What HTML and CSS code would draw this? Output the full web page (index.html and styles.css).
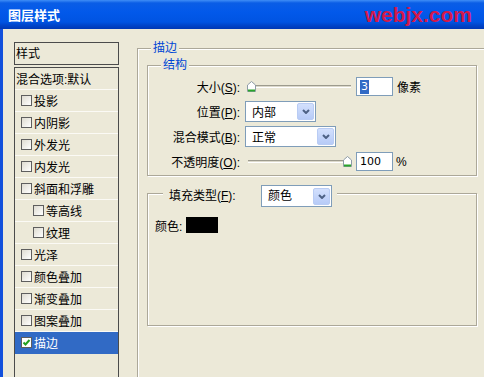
FILE: index.html
```html
<!DOCTYPE html>
<html>
    <head>
        <meta charset="utf-8">
        <title>图层样式</title>
        <link rel="stylesheet" href="styles.css">
    </head>
    <body>
        <div class="window">
            <div class="titlebar">
                <span class="title">图层样式</span>
                <span class="watermark">webjx.com</span>
            </div>
            <div class="frame">
                <div class="sidebar">
                    <div class="styles-head">样式</div>
                    <ul class="styles-list">
                        <li class="plain">混合选项:默认</li>
                        <li><span class="cb"></span>投影</li>
                        <li><span class="cb"></span>内阴影</li>
                        <li><span class="cb"></span>外发光</li>
                        <li><span class="cb"></span>内发光</li>
                        <li><span class="cb"></span>斜面和浮雕</li>
                        <li class="sub"><span class="cb"></span>等高线</li>
                        <li class="sub"><span class="cb"></span>纹理</li>
                        <li><span class="cb"></span>光泽</li>
                        <li><span class="cb"></span>颜色叠加</li>
                        <li><span class="cb"></span>渐变叠加</li>
                        <li><span class="cb"></span>图案叠加</li>
                        <li class="on"><span class="cb"><svg width="9" height="9" viewBox="0 0 9 9"><path d="M1.5 4.5 L3.5 6.5 L7.5 2" stroke="#21a121" stroke-width="2" fill="none"/></svg></span>描边</li>
                    </ul>
                </div>
                <div class="main">
                    <fieldset class="group outer">
                        <legend>描边</legend>
                        <fieldset class="group struct">
                            <legend>结构</legend>
                            <div class="rows">
                                <div class="row">
                                    <span class="lbl">大小(<u>S</u>):</span>
                                    <div class="slider min">
                                        <svg class="thumb" width="9" height="11" viewBox="0 0 9 11"><path d="M0.5 4 L4.5 0.5 L8.5 4 V10.5 H0.5 Z" fill="#fff" stroke="#8d9ba6"/><path d="M1 9.5 H8" stroke="#2aa52a" stroke-width="2"/></svg>
                                        <span class="track"></span>
                                    </div>
                                    <span class="num"><span class="sel">3</span></span>
                                    <span class="unit">像素</span>
                                </div>
                                <div class="row">
                                    <span class="lbl">位置(<u>P</u>):</span>
                                    <div class="select w71">
                                        <span>内部</span>
                                        <span class="drop"><svg width="8" height="5" viewBox="0 0 8 5"><path d="M1 1 L4 4 L7 1" stroke="#4d6185" stroke-width="2" fill="none"/></svg></span>
                                    </div>
                                </div>
                                <div class="row">
                                    <span class="lbl">混合模式(<u>B</u>):</span>
                                    <div class="select w91">
                                        <span>正常</span>
                                        <span class="drop"><svg width="8" height="5" viewBox="0 0 8 5"><path d="M1 1 L4 4 L7 1" stroke="#4d6185" stroke-width="2" fill="none"/></svg></span>
                                    </div>
                                </div>
                                <div class="row">
                                    <span class="lbl">不透明度(<u>O</u>):</span>
                                    <div class="slider max">
                                        <span class="track"></span>
                                        <svg class="thumb" width="9" height="11" viewBox="0 0 9 11"><path d="M0.5 4 L4.5 0.5 L8.5 4 V10.5 H0.5 Z" fill="#fff" stroke="#8d9ba6"/><path d="M1 9.5 H8" stroke="#2aa52a" stroke-width="2"/></svg>
                                    </div>
                                    <span class="num">100</span>
                                    <span class="unit pct">%</span>
                                </div>
                            </div>
                        </fieldset>
                        <fieldset class="group fill">
                            <legend>
                                <span class="legend-row">
                                    <span class="fill-lbl">填充类型(<u>F</u>):</span>
                                    <span class="select w71 tall">
                                        <span>颜色</span>
                                        <span class="drop"><svg width="8" height="5" viewBox="0 0 8 5"><path d="M1 1 L4 4 L7 1" stroke="#4d6185" stroke-width="2" fill="none"/></svg></span>
                                    </span>
                                </span>
                            </legend>
                            <div class="fill-body">
                                <div class="color-row">
                                    <span>颜色:</span>
                                    <span class="swatch"></span>
                                </div>
                            </div>
                        </fieldset>
                    </fieldset>
                </div>
            </div>
        </div>
    </body>
</html>
```

FILE: styles.css
```css
* {
    box-sizing: border-box;
}

body {
    margin: 0;
    font-family: "Liberation Sans", "Noto Sans CJK SC", sans-serif;
    font-size: 12px;
    color: black;
    background-color: #ece9d8;
}

.window {
    width: 484px;
    height: 377px;
    overflow: hidden;
    background-color: #ece9d8;
}

.titlebar {
    height: 29px;
    display: flex;
    align-items: center;
    justify-content: space-between;
    padding: 0 12px 0 8px;
    background: linear-gradient(#3f8ef6 0, #0a5de6 3px, #0259ea 12px, #0054e2 22px, #0046cc 25px, #0038b4 29px);
}

.title {
    color: white;
    font: bold 13px "Noto Sans CJK SC", sans-serif;
}

.watermark {
    color: #d3184b;
    font: bold 21px "Liberation Sans", sans-serif;
}

.frame {
    display: flex;
    height: 348px;
    border-left: 3px solid #1250dc;
}

/* style list on the left */

.sidebar {
    flex: none;
    width: 105px;
    margin: 13px 0 0 11px;
    display: flex;
    flex-direction: column;
}

.styles-head {
    height: 23px;
    border: solid 1px #4b4b4b;
    padding: 1px 0 0 1px;
    line-height: 21px;
    margin-bottom: 2px;
}

.styles-list {
    flex: 1;
    list-style: none;
    margin: 0;
    padding: 0;
    border: solid 1px #4b4b4b;
    border-bottom: none;
}

.styles-list li {
    height: 22px;
    display: flex;
    align-items: center;
    gap: 2px;
    padding-left: 6px;
    border-bottom: solid 1px #fbfaf5;
    white-space: nowrap;
}

.styles-list li.plain {
    padding-left: 1px;
}

.styles-list li.sub {
    padding-left: 18px;
}

.styles-list li.on {
    background-color: #316ac5;
    border-bottom-color: #316ac5;
    color: white;
}

.cb {
    flex: none;
    width: 11px;
    height: 11px;
    border: solid 1px #5e5e5e;
    background: linear-gradient(135deg, #dedbd0, #ffffff);
    display: flex;
    align-items: center;
    justify-content: center;
}

.on .cb {
    background: white;
}

/* right side */

.main {
    flex: none;
    width: 360px;
    margin: 12px 0 0 18px;
}

.group {
    margin: 0;
    padding: 0;
    min-width: 0;
    border: solid 1px #aca899;
    box-shadow: inset 1px 1px 0 white, 1px 1px 0 white;
}

.group legend {
    margin-left: 13px;
    padding: 0 2px;
    line-height: 14px;
    color: #0046d5;
    background-color: #ece9d8;
}

.outer {
    height: 400px;
}

.struct {
    width: 330px;
    margin: 3px 0 0 9px;
    padding-bottom: 1px;
}

.rows {
    padding-top: 2px;
}

.row {
    height: 25px;
    display: flex;
    align-items: center;
}

.lbl {
    flex: none;
    width: 92px;
    margin-right: 5px;
    text-align: right;
    white-space: nowrap;
}

.slider {
    flex: none;
    width: 104px;
    height: 11px;
    display: flex;
    align-items: center;
}

.slider.min {
    margin: 0 5px 0 2px;
}

.slider.max {
    margin: 0 4px 0 3px;
}

.thumb {
    flex: none;
    display: block;
}

.track {
    flex: 1;
    height: 3px;
    border-top: solid 1px #9d9b8e;
    border-bottom: solid 1px white;
    background-color: #dcd9cb;
}

.num {
    flex: none;
    width: 37px;
    height: 19px;
    border: solid 1px #7f9db9;
    background-color: white;
    padding-left: 3px;
    line-height: 17px;
    font-family: "DejaVu Sans", sans-serif;
    font-size: 11px;
}

.sel {
    display: inline-block;
    background-color: #316ac5;
    color: white;
    padding: 0 1px;
    line-height: 14px;
}

.unit {
    margin-left: 4px;
}

.unit.pct {
    margin-left: 3px;
}

.select {
    flex: none;
    height: 21px;
    display: flex;
    align-items: center;
    justify-content: space-between;
    border: solid 1px #7f9db9;
    background-color: white;
    padding-left: 6px;
    color: black;
}

.select.w71 {
    width: 71px;
}

.select.w91 {
    width: 91px;
}

.select.tall {
    height: 22px;
}

.drop {
    width: 17px;
    height: 17px;
    margin-right: 1px;
    border: solid 1px #b9ccf4;
    border-radius: 2px;
    background: linear-gradient(#d3e0fd, #b7cbf7);
    display: flex;
    align-items: center;
    justify-content: center;
}

.fill {
    width: 330px;
    margin: 9px 0 0 9px;
}

.fill legend {
    margin-left: 15px;
    padding: 0 5px 0 6px;
    height: 16px;
    color: black;
}

.legend-row {
    display: flex;
    align-items: flex-start;
    height: 16px;
}

.fill-lbl {
    width: 92px;
    line-height: 22px;
    white-space: nowrap;
}

.fill-body {
    height: 124px;
    padding: 16px 0 0 7px;
}

.color-row {
    height: 16px;
    display: flex;
    align-items: center;
    gap: 4px;
}

.swatch {
    width: 32px;
    height: 16px;
    background-color: black;
}
```
